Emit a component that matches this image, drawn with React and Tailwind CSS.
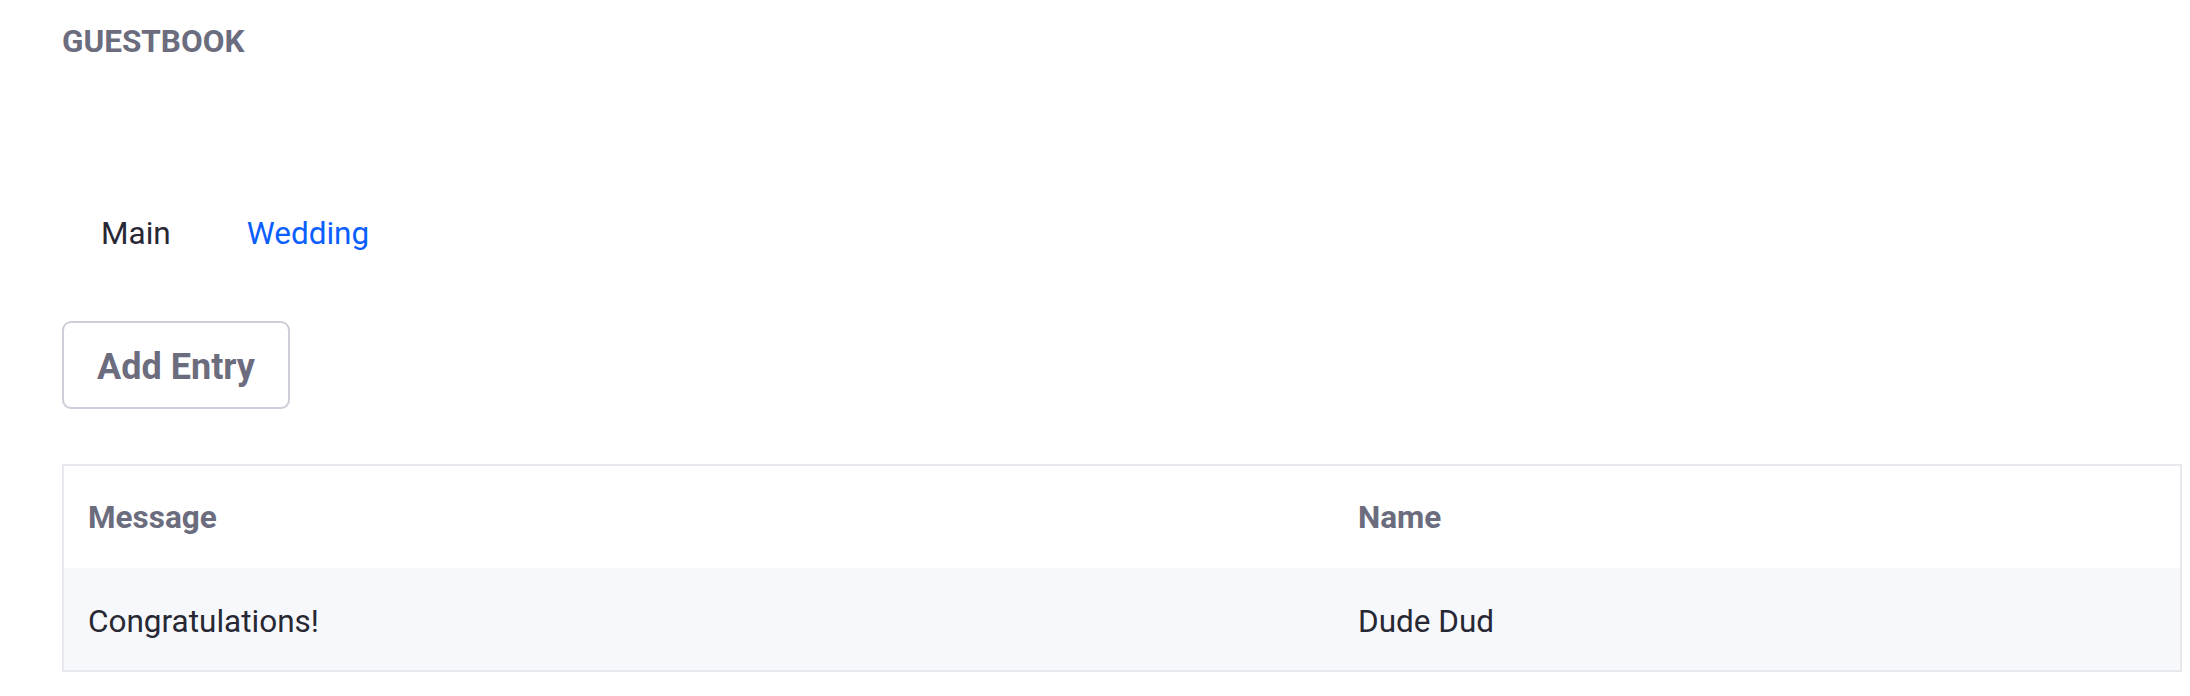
import React, { useState } from 'react';

const tabs = ['Main', 'Wedding'];

const entries = [
  { message: 'Congratulations!', name: 'Dude Dud' },
];

const App = () => {
  const [activeTab, setActiveTab] = useState('Main');

  return (
    <div
      className="bg-white min-h-screen pl-[62px] pr-[8px] text-[#272833]"
      style={{ fontFamily: 'Roboto, "Noto Sans", sans-serif' }}
    >
      <h1 className="pt-[24px] text-[31.5px] leading-[36px] font-bold text-[#6b6c7e]">GUESTBOOK</h1>

      {/* Tabs */}
      <nav className="flex gap-[4px] mt-[138px] pl-[3px]">
        {tabs.map((tab) => (
          <button
            key={tab}
            type="button"
            onClick={() => setActiveTab(tab)}
            className={`px-[36px] py-[18px] text-[31.5px] leading-[36px] ${
              activeTab === tab ? 'text-[#272833]' : 'text-[#0b5fff]'
            }`}
          >
            {tab}
          </button>
        ))}
      </nav>

      <button
        type="button"
        className="mt-[51px] h-[88px] w-[228px] pt-[26px] border-2 border-[#cdced9] rounded-[9px] bg-white text-[36px] leading-[36px] font-bold text-[#6b6c7e] flex justify-center"
      >
        Add Entry
      </button>

      {/* Entries table */}
      <div className="mt-[55px] w-[2120px] border-2 border-[#e7e7ed]">
        <table className="w-full border-collapse table-fixed">
          <thead>
            <tr>
              <th className="w-[1270px] h-[102px] px-[24px] pt-[34px] align-top text-left text-[31.5px] leading-[36px] font-bold text-[#6b6c7e]">
                Message
              </th>
              <th className="h-[102px] px-[24px] pt-[34px] align-top text-left text-[31.5px] leading-[36px] font-bold text-[#6b6c7e]">
                Name
              </th>
            </tr>
          </thead>
          <tbody>
            {entries.map((item, idx) => (
              <tr key={`entry-${idx}`} className="bg-[#f7f8fb]">
                <td className="h-[102px] px-[24px] pt-[36px] align-top text-[31.5px] leading-[36px]">{item.message}</td>
                <td className="h-[102px] px-[24px] pt-[36px] align-top text-[31.5px] leading-[36px]">{item.name}</td>
              </tr>
            ))}
          </tbody>
        </table>
      </div>
    </div>
  );
};

export default App;
